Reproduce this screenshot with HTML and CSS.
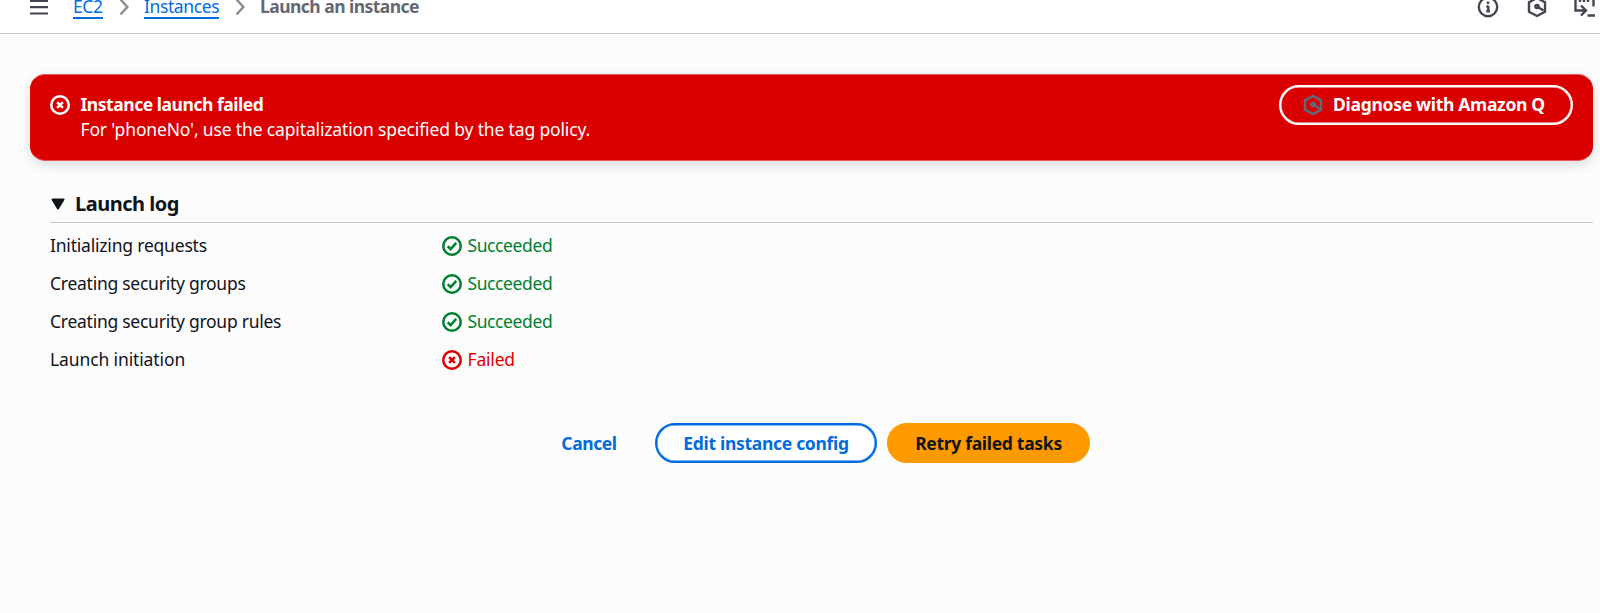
FILE: index.html
```html
<!DOCTYPE html>
<html lang="en">
<head>
<meta charset="utf-8">
<title>Launch an instance</title>
<link rel="stylesheet" href="styles.css">
</head>
<body>
<svg class="defs" width="0" height="0">
  <symbol id="ok" viewBox="0 0 16 16"><circle cx="8" cy="8" r="7"/><path d="m4.600 8.200 2.300 2.300 4.500-5"/></symbol>
  <symbol id="error" viewBox="0 0 16 16"><circle cx="8" cy="8" r="7"/><path d="m5.700 5.700 4.600 4.600M10.300 5.700l-4.600 4.600"/></symbol>
  <symbol id="amazonq" viewBox="0 0 20 22"><path d="M10 2 18 6.300V15.700L10 20 2 15.700V6.300Z"/><path d="m10 10.500 6.500 4"/><circle cx="10" cy="10.500" r="1.600"/></symbol>
</svg>
<header class="topbar">
  <svg class="menu" width="18" height="16" viewBox="0 0 18 16"><path d="M0 2h18M0 8.200h18M0 14.500h18"/></svg>
  <nav class="crumbs">
    <a class="link ec2">EC2</a>
    <svg class="chev" width="10" height="18" viewBox="0 0 10 18"><path d="m1.500 1.500 6.800 7.500-6.800 7.500"/></svg>
    <a class="link instances">Instances</a>
    <svg class="chev chev2" width="10" height="18" viewBox="0 0 10 18"><path d="m1.500 1.500 6.800 7.500-6.800 7.500"/></svg>
    <span class="current">Launch an instance</span>
  </nav>
  <div class="tools">
    <svg width="22" height="22" viewBox="0 0 22 22"><circle cx="11" cy="11" r="9.200"/><path d="M11.300 9.800V16M9.300 10.500h2M9.300 15.200h3.700M11 5.500v2.500"/></svg>
    <svg class="q" width="20" height="22"><use href="#amazonq"/></svg>
    <svg class="shell" width="22" height="22" viewBox="0 0 22 22"><path d="M1.500 0v14.500h9.500M7 9.500l5 5-5 5M6 3v3M10 3v3M14 3v3M19.500 0v10.500M13.500 19.500h7.500"/></svg>
  </div>
</header>
<main>
  <section class="banner">
    <svg class="status" width="20" height="20"><use href="#error"/></svg>
    <div class="message">
      <div class="title">Instance launch failed</div>
      <div class="detail">For 'phoneNo', use the capitalization specified by the tag policy.</div>
    </div>
    <button class="btn diagnose"><svg class="q" width="20" height="22"><use href="#amazonq"/></svg><span>Diagnose with Amazon Q</span></button>
  </section>
  <section class="log">
    <h2><svg width="14" height="12" viewBox="0 0 14 12"><path d="M1.500 1.500h11l-5.500 9Z"/></svg><span>Launch log</span></h2>
    <div class="row"><span class="task t1">Initializing requests</span><span class="state ok"><svg width="20" height="20"><use href="#ok"/></svg>Succeeded</span></div>
    <div class="row"><span class="task t2">Creating security groups</span><span class="state ok"><svg width="20" height="20"><use href="#ok"/></svg>Succeeded</span></div>
    <div class="row"><span class="task t3">Creating security group rules</span><span class="state ok"><svg width="20" height="20"><use href="#ok"/></svg>Succeeded</span></div>
    <div class="row"><span class="task t4">Launch initiation</span><span class="state failed"><svg width="20" height="20"><use href="#error"/></svg>Failed</span></div>
  </section>
  <div class="actions">
    <button class="btn cancel">Cancel</button>
    <button class="btn edit">Edit instance config</button>
    <button class="btn retry">Retry failed tasks</button>
  </div>
</main>
</body>
</html>
```
FILE: styles.css
```css
* { box-sizing: border-box; }
body { margin: 0; width: 1600px; height: 613px; overflow: hidden; background: #fcfcfd; color: #0f141a; font-family: "Noto Sans", "Open Sans", sans-serif; font-size: 17.5px; line-height: 25px; letter-spacing: -0.4px; white-space: nowrap; }
svg { display: block; flex: none; fill: none; stroke: currentColor; stroke-width: 2; overflow: visible; }
.defs { position: absolute; }
.topbar { height: 34px; display: flex; align-items: flex-start; background: #fff; border-bottom: 1px solid #c6c6cd; overflow: hidden; }
.menu { margin: -1px 0 0 30px; color: #424650; stroke-width: 2.200; }
.crumbs { display: flex; margin: -6px 0 0 25px; }
.link { color: #006ce0; height: 25px; border-bottom: 2px solid #006ce0; }
.ec2 { width: 30px; }
.instances { width: 75px; }
.chev { color: #8c8c94; stroke-width: 2.500; margin: 4px 15px 0 16px; }
.current { color: #656871; font-weight: 700; letter-spacing: -0.54px; }
.tools { display: flex; margin: -4px 0 0 auto; color: #424650; }
.tools svg { stroke-width: 2.400; }
.tools .q { margin: 0 27.500px 0 27.500px; }
.tools .shell { margin-right: 4px; }
.banner { display: flex; align-items: flex-start; margin: 40px 7px 0 29.500px; height: 87px; padding: 10px 19px 0 21px; background: #db0000; border: 1px solid #e25c5c; border-left-color: #db0000; border-right-color: #db0000; border-radius: 15px; color: #fff; box-shadow: 0 4px 12px rgba(0, 7, 22, .13); }
.status { margin-top: 9.500px; margin-left: -1.500px; }
.message { margin: 7px 0 0 10.500px; }
.title, .btn, h2 { font-weight: 700; }
.title { letter-spacing: -0.46px; }
.detail { letter-spacing: -0.15px; }
.btn { font-family: inherit; font-size: 17.5px; line-height: 25px; letter-spacing: -0.3px; height: 40px; border-radius: 20px; border: 2px solid; background: transparent; padding: 0; display: flex; align-items: center; justify-content: center; }
.diagnose { width: 294px; padding: 0 4px 1px 0; margin-left: auto; color: #fff; gap: 10px; box-shadow: inset 0 0 0 .5px #fff; }
.diagnose .q { color: #5f6b7a; stroke-width: 2.500; }
.log { margin: 30px 7px 0 50px; }
h2 { display: flex; align-items: center; gap: 10px; height: 32px; margin: 0 0 4px; padding-bottom: 6px; border-bottom: 1px solid #c6c6cd; font-size: 20px; letter-spacing: -0.5px; }
h2 svg { fill: currentColor; margin: 1px 0 0 1px; stroke-linejoin: round; }
.row { display: flex; height: 38px; align-items: center; }
.task { width: 392px; padding-bottom: 1px; }
.t1 { letter-spacing: -0.2px; }
.t2 { letter-spacing: -0.26px; }
.t3 { letter-spacing: -0.26px; }
.t4 { letter-spacing: -0.12px; }
.state { display: flex; align-items: center; gap: 5.500px; padding-bottom: 1px; }
.ok { color: #00802f; }
.failed { color: #db0000; letter-spacing: -0.2px; }
.state svg { margin-top: 1px; }
.actions { display: flex; margin: 44px 0 0 541px; }
.cancel { width: 96px; border-color: transparent; color: #006ce0; letter-spacing: -0.4px; }
.edit { width: 222px; margin-left: 18px; color: #006ce0; background: #fff; box-shadow: inset 0 0 0 .5px #006ce0; }
.retry { width: 203px; margin-left: 10px; color: #0f141a; background: #ff9900; border-color: #ff9900; }
```
